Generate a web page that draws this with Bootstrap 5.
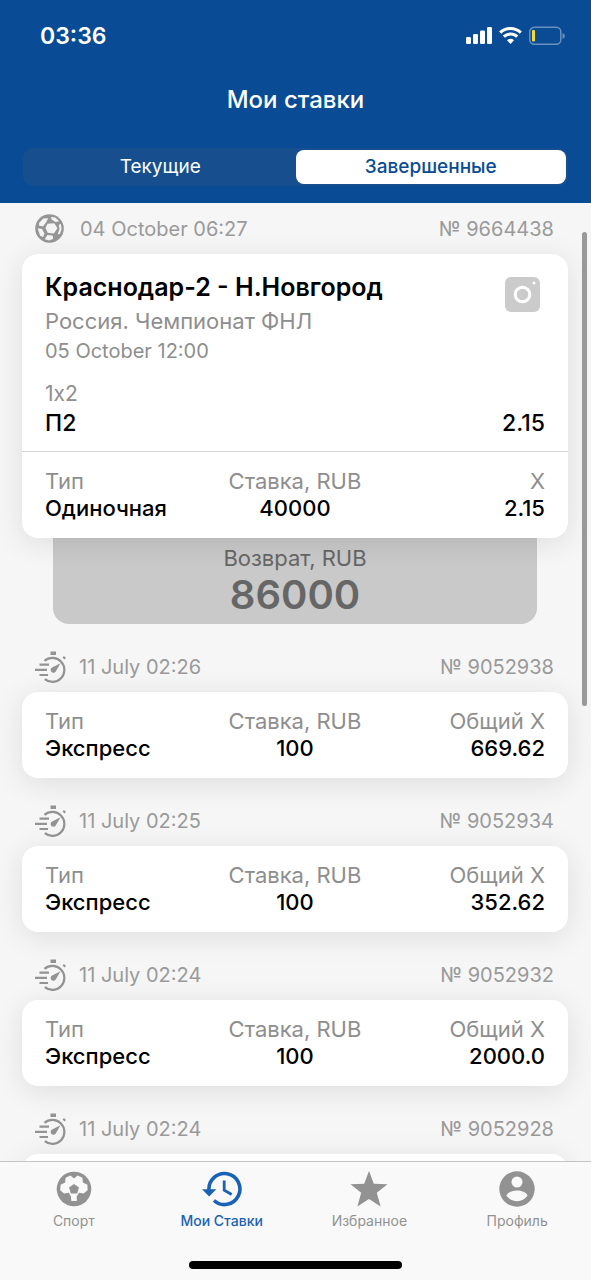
<!DOCTYPE html>
<html lang="ru">
<head>
<meta charset="utf-8">
<meta name="viewport" content="width=device-width, initial-scale=1">
<title>Мои ставки</title>
<link rel="stylesheet" href="https://cdn.jsdelivr.net/npm/bootstrap@5.3.0/dist/css/bootstrap.min.css">
<style>
  body { font-family: Inter, "Liberation Sans", sans-serif; background: #f6f6f6; color: #000; }
  button { font-family: inherit; }
  .app-header { background: #094b94; color: #fff; padding: 16px 23px 17px; }
  .status-bar { height: 40px; padding-left: 17px; }
  .clock { font-size: 23px; line-height: 40px; font-weight: 600; }
  .page-title { font-size: 24px; line-height: 32px; font-weight: 500; margin: 28px 0 32px; }
  .segments { background: #174f8e; border-radius: 10px; padding: 2px; height: 38px; }
  .segments .btn { border: 0; border-radius: 8px; color: #fff; font-size: 19px; line-height: 34px; font-weight: 400; padding: 0; }
  .segments .btn.active { background: #fff; color: #094b94; font-weight: 500; }
  .bet { padding: 0 23px 17px 22px; }
  .bet-head { height: 51px; padding: 0 14px 0 13px; color: #9a9a9a; font-size: 20px; line-height: 28px; }
  .bet-card { border: 0; border-radius: 16px; box-shadow: 0 5px 30px rgba(0,0,0,.1); z-index: 1; }
  .event { padding: 16px 23px 13px; border-bottom: 1px solid #d6d6d6; }
  .event-title { font-size: 25px; line-height: 34px; font-weight: 600; margin: 0; }
  .league { font-size: 22px; line-height: 34px; }
  .event-date { font-size: 20px; line-height: 26px; margin-bottom: 16px; }
  .market { font-size: 21px; line-height: 28px; font-feature-settings: "calt" 0; }
  .pick { font-size: 23px; line-height: 30px; font-weight: 500; }
  .muted { color: #8e8e8e; }
  .totals { padding: 16px 23px; }
  .term { font-size: 22px; line-height: 26px; font-weight: 400; color: #8e8e8e; }
  .val { font-size: 22px; line-height: 28px; font-weight: 500; margin: 0; }
  .payout { background: #c9c9c9; color: #666; margin: 0 31px; height: 86px; padding-top: 6px; border-radius: 0 0 16px 16px; }
  .payout-term { font-size: 22px; line-height: 28px; }
  .payout-sum { font-size: 40px; line-height: 46px; font-weight: 600; }
  .insta { margin-top: 7px; margin-right: 5px; }
  .scroll-thumb { position: absolute; right: 4px; top: 29px; width: 5px; height: 474px; border-radius: 3px; background: #999; z-index: 2; }
  .tabbar { background: #f9f9f9; border-top: 1px solid #c4c4c4; height: 119px; padding-top: 9px; }
  .tabbar a { color: #929292; font-size: 14px; line-height: 20px; font-weight: 400; text-decoration: none; gap: 4px; }
  .tabbar a.active { color: #1a62b5; font-weight: 500; }
  .home-bar { width: 36%; height: 8px; border-radius: 4px; background: #000; margin-bottom: 11px; }
</style>
</head>
<body>
<svg class="d-none" aria-hidden="true">
  <symbol id="timer" viewBox="0 0 32 32">
    <g fill="none" stroke="#939393" stroke-width="2.2">
      <path d="M9.500 9.800A12 12 0 1 1 9.800 28.200"/>
      <path d="M4.500 13.600h9.500M0 18.800h12M4.500 24h8.500"/>
    </g>
    <path fill="#939393" d="M15.500.5h5.500v3.500h-5.500zM29 5l2 2-1.500 1.500-2-2zM25.500 12.300L20.900 20.300a2.800 2.800 0 1 1-3.800-3.800z"/>
  </symbol>
</svg>

<div class="vh-100 d-flex flex-column overflow-hidden">
  <header class="app-header flex-shrink-0">
    <div class="status-bar d-flex justify-content-between align-items-center">
      <span class="clock">03:36</span>
      <svg width="102" height="20" viewBox="0 0 102 20" aria-hidden="true">
        <g fill="#fff"><rect y="11" width="5" height="7" rx="1.300"/><rect x="7" y="8" width="5" height="10" rx="1.300"/><rect x="14" y="4.500" width="5" height="13.500" rx="1.300"/><rect x="21" y="1" width="5" height="17" rx="1.300"/></g>
        <g fill="none" stroke="#fff" stroke-width="3.200"><path d="M34.200 6.600a15 15 0 0 1 20.600 0"/><path d="M37.800 10.700a9.600 9.600 0 0 1 13.400 0"/></g>
        <path fill="#fff" d="M41 14.200a5 5 0 0 1 7 0L44.500 18z"/>
        <rect x="63.800" y="1.300" width="31" height="17" rx="4.500" fill="none" stroke="#6990bf" stroke-width="1.500"/>
        <path d="M96.500 7v6q2.500-.8 2.500-3t-2.500-3z" fill="#6990bf"/>
        <rect x="66" y="4" width="3" height="11.500" rx="1" fill="#f5dd31"/>
      </svg>
    </div>
    <h1 class="page-title text-center">Мои ставки</h1>
    <div class="segments d-flex" role="group" aria-label="Ставки">
      <button type="button" class="btn w-50">Текущие</button>
      <button type="button" class="btn w-50 active" aria-pressed="true">Завершенные</button>
    </div>
  </header>

  <main class="flex-fill overflow-hidden position-relative">
    <div class="scroll-thumb"></div>

    <article class="bet">
      <div class="bet-head d-flex justify-content-between align-items-center">
        <span class="d-flex align-items-center gap-3">
          <svg width="29" height="29" viewBox="0 0 30 30" aria-hidden="true">
            <circle cx="15" cy="15" r="14.800" fill="#969696"/>
            <g fill="#f4f4f4">
              <path d="M13 10l7-.4 3.200 5.200-3.700 5.400-6.300-.8-2.400-5z"/>
              <path d="M4.200 9.200L8.500 4.600l5.200-.2-2.300 4.300-3 4-4.200-.6z"/>
              <path d="M16.500 3.200l4.500.4 4 3.800-3.800 1-4-2.700z"/>
              <path d="M24.500 11.500l2.200-1.300.8 5.300-1.700 5.200-2.300.3 1.900-5.500z"/>
              <path d="M2.700 14.800l4.600.6 2.400 4.800-1.200 3.600-3.200-1.400z"/>
              <path d="M12.800 21.700l5.400.6.600 3.200-4 1.900-4.800-1.400z"/>
            </g>
          </svg>
          <time>04 October 06:27</time>
        </span>
        <span>№ 9664438</span>
      </div>
      <div class="card bet-card">
        <div class="event">
          <div class="d-flex justify-content-between">
            <div>
              <h2 class="event-title">Краснодар-2 - Н.Новгород</h2>
              <div class="league muted">Россия. Чемпионат ФНЛ</div>
            </div>
            <svg class="insta" width="35" height="35" viewBox="0 0 35 35" aria-hidden="true">
              <rect width="35" height="35" rx="6" fill="#cbcbcb"/>
              <circle cx="17.500" cy="17.500" r="7.300" fill="none" stroke="#fff" stroke-width="3"/>
              <circle cx="29" cy="6" r="1.500" fill="#fff"/>
            </svg>
          </div>
          <div class="event-date muted">05 October 12:00</div>
          <div class="market muted">1x2</div>
          <div class="pick d-flex justify-content-between"><span>П2</span><span>2.15</span></div>
        </div>
        <dl class="totals row g-0 mb-0">
          <div class="col-4"><dt class="term">Тип</dt><dd class="val">Одиночная</dd></div>
          <div class="col-4 text-center"><dt class="term">Ставка, RUB</dt><dd class="val">40000</dd></div>
          <div class="col-4 text-end"><dt class="term">X</dt><dd class="val">2.15</dd></div>
        </dl>
      </div>
      <div class="payout text-center">
        <div class="payout-term">Возврат, RUB</div>
        <div class="payout-sum">86000</div>
      </div>
    </article>

    <article class="bet">
      <div class="bet-head d-flex justify-content-between align-items-center">
        <span class="d-flex align-items-center gap-2"><svg width="36" height="32" aria-hidden="true"><use href="#timer" width="32" height="32"/></svg><time>11 July 02:26</time></span>
        <span>№ 9052938</span>
      </div>
      <dl class="card bet-card totals mb-0"><div class="row g-0">
        <div class="col-4"><dt class="term">Тип</dt><dd class="val">Экспресс</dd></div>
        <div class="col-4 text-center"><dt class="term">Ставка, RUB</dt><dd class="val">100</dd></div>
        <div class="col-4 text-end"><dt class="term">Общий X</dt><dd class="val">669.62</dd></div>
      </div></dl>
    </article>

    <article class="bet">
      <div class="bet-head d-flex justify-content-between align-items-center">
        <span class="d-flex align-items-center gap-2"><svg width="36" height="32" aria-hidden="true"><use href="#timer" width="32" height="32"/></svg><time>11 July 02:25</time></span>
        <span>№ 9052934</span>
      </div>
      <dl class="card bet-card totals mb-0"><div class="row g-0">
        <div class="col-4"><dt class="term">Тип</dt><dd class="val">Экспресс</dd></div>
        <div class="col-4 text-center"><dt class="term">Ставка, RUB</dt><dd class="val">100</dd></div>
        <div class="col-4 text-end"><dt class="term">Общий X</dt><dd class="val">352.62</dd></div>
      </div></dl>
    </article>

    <article class="bet">
      <div class="bet-head d-flex justify-content-between align-items-center">
        <span class="d-flex align-items-center gap-2"><svg width="36" height="32" aria-hidden="true"><use href="#timer" width="32" height="32"/></svg><time>11 July 02:24</time></span>
        <span>№ 9052932</span>
      </div>
      <dl class="card bet-card totals mb-0"><div class="row g-0">
        <div class="col-4"><dt class="term">Тип</dt><dd class="val">Экспресс</dd></div>
        <div class="col-4 text-center"><dt class="term">Ставка, RUB</dt><dd class="val">100</dd></div>
        <div class="col-4 text-end"><dt class="term">Общий X</dt><dd class="val">2000.0</dd></div>
      </div></dl>
    </article>

    <article class="bet">
      <div class="bet-head d-flex justify-content-between align-items-center">
        <span class="d-flex align-items-center gap-2"><svg width="36" height="32" aria-hidden="true"><use href="#timer" width="32" height="32"/></svg><time>11 July 02:24</time></span>
        <span>№ 9052928</span>
      </div>
      <div class="card bet-card p-4"></div>
    </article>
  </main>

  <footer class="tabbar flex-shrink-0 d-flex flex-column justify-content-between">
    <nav class="row g-0 text-center">
      <a href="#" class="col-3 d-flex flex-column align-items-center">
        <svg width="36" height="36" viewBox="0 0 36 36" aria-hidden="true">
          <circle cx="18" cy="18" r="17.300" fill="#929292"/>
          <path fill="#f9f9f9" d="M18 7.500l3.600-3 4.800 2.300.5 4.700 4.500 2.300.2 5.400-4 3.400-4.600-.8-2.300 3.800.2 4.500-5.600.0-.3-4.500-2.200-3.800-4.800.8-3.800-3.400.4-5.400 4.500-2.300.5-4.700 4.800-2.300z"/>
          <path fill="#929292" d="M18 13l5 3.600-1.900 5.900h-6.200L13 16.600z"/>
        </svg>
        Спорт
      </a>
      <a href="#" class="col-3 d-flex flex-column align-items-center active" aria-current="page">
        <svg width="40" height="36" viewBox="0 0 40 36" aria-hidden="true">
          <g fill="none" stroke="#1a62b5">
            <path stroke-width="3.600" d="M7 19.500A15.500 15.500 0 1 1 12 29.500"/>
            <path stroke-width="2.800" d="M22.200 9.500v9.700l7.500 4.300"/>
          </g>
          <path fill="#1a62b5" d="M0 18.300h14.300L7.200 25.600z"/>
        </svg>
        Мои Ставки
      </a>
      <a href="#" class="col-3 d-flex flex-column align-items-center">
        <svg width="38" height="36" viewBox="0 0 38 36" aria-hidden="true">
          <path fill="#929292" d="M19 0l4.800 12.700 13.700.6L26.800 21.800 30.600 35.500 19 27.900 7.400 35.500l3.800-13.700L.5 13.300l13.700-.6z"/>
        </svg>
        Избранное
      </a>
      <a href="#" class="col-3 d-flex flex-column align-items-center">
        <svg width="36" height="36" viewBox="0 0 36 36" aria-hidden="true">
          <circle cx="18" cy="18" r="17.700" fill="#929292"/>
          <circle cx="18" cy="11" r="5.500" fill="#f9f9f9"/>
          <path fill="#f9f9f9" d="M7.400 24.500C8.500 21 14 19.400 18 19.400s9.500 1.600 10.600 5.100a12.800 12.800 0 0 1-21.200 0z"/>
        </svg>
        Профиль
      </a>
    </nav>
    <div class="home-bar align-self-center"></div>
  </footer>
</div>
<script src="https://cdn.jsdelivr.net/npm/bootstrap@5.3.0/dist/js/bootstrap.bundle.min.js"></script>
</body>
</html>
